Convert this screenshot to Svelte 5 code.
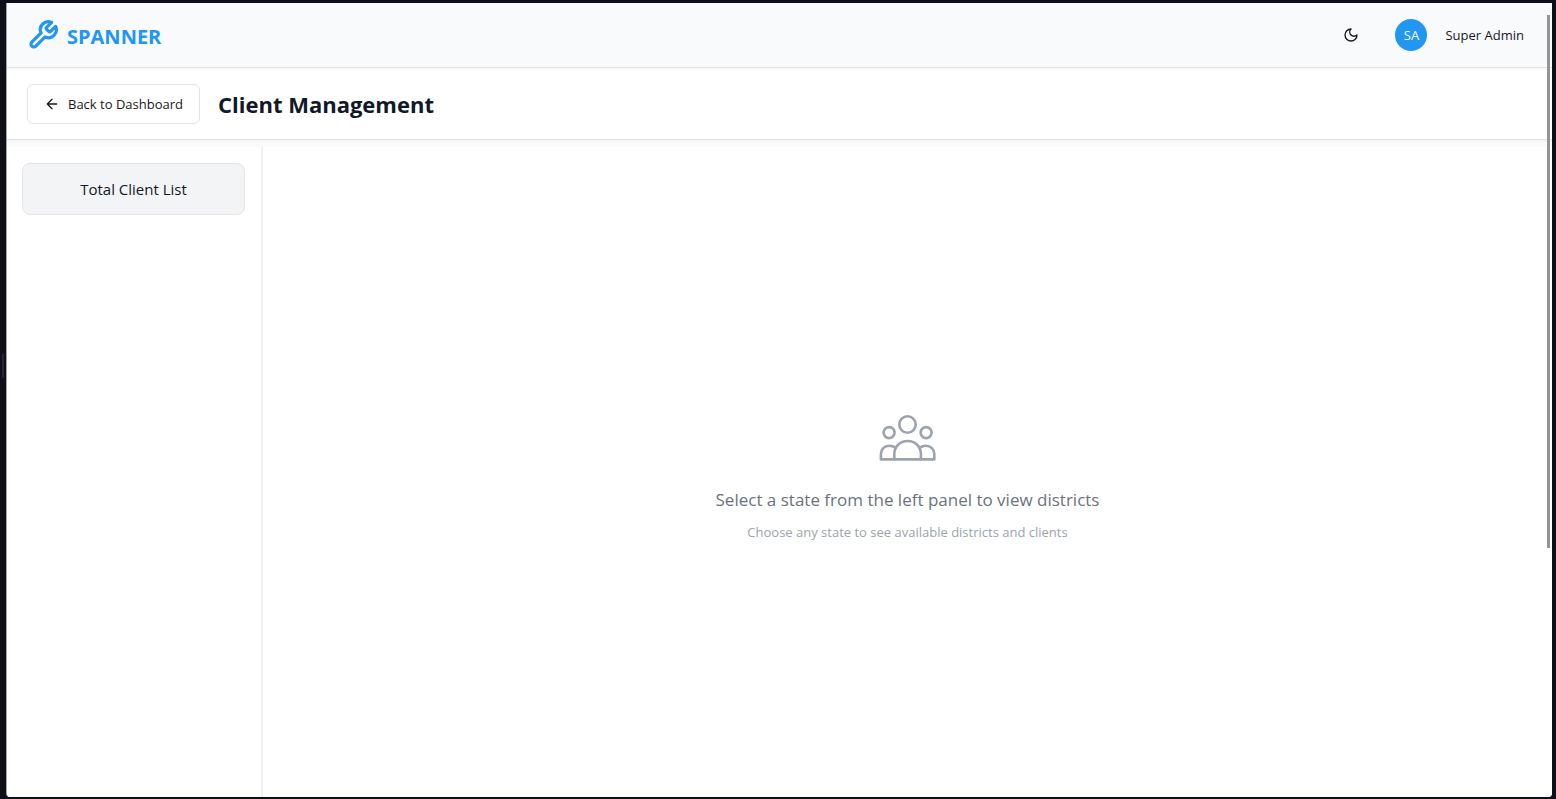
<script>
  let dark = $state(false);
</script>

<div class="frame">
  <span class="grip"></span>
  <div class="app">
    <header class="topbar">
      <a class="brand" href="#home">
        <svg class="wrench" viewBox="0 0 24 24" aria-hidden="true">
          <path d="M14.7 6.3a1 1 0 0 0 0 1.4l1.6 1.6a1 1 0 0 0 1.4 0l3.77-3.77a6 6 0 0 1-7.94 7.94l-6.91 6.91a2.12 2.12 0 0 1-3-3l6.91-6.91a6 6 0 0 1 7.94-7.94l-3.76 3.76z" />
        </svg>
        <span>SPANNER</span>
      </a>
      <div class="account">
        <button class="theme" aria-label="Toggle theme" aria-pressed={dark} onclick={() => (dark = !dark)}>
          <svg class="small" viewBox="0 0 24 24" aria-hidden="true">
            <path d="M12 3a6 6 0 0 0 9 9 9 9 0 1 1-9-9Z" />
          </svg>
        </button>
        <button class="user">
          <span class="avatar">SA</span>
          <span>Super Admin</span>
        </button>
      </div>
    </header>

    <div class="heading">
      <button class="back">
        <svg class="small" viewBox="0 0 24 24" aria-hidden="true">
          <path d="m12 19-7-7 7-7M19 12H5" />
        </svg>
        <span>Back to Dashboard</span>
      </button>
      <h1>Client Management</h1>
    </div>

    <div class="body">
      <aside>
        <button class="total">Total Client List</button>
      </aside>
      <main>
        <svg class="people" viewBox="0 0 64 64" aria-hidden="true">
          <circle cx="31.5" cy="18.5" r="8.2" />
          <circle cx="13.1" cy="26.6" r="5.5" />
          <circle cx="50.1" cy="26.6" r="5.5" />
          <path d="M18.3 53.4V48c0-7.4 5.7-13 13.3-13s13.3 5.600 13.300 13v5.400" />
          <path d="M19.300 41.600c-1.600-1.200-3.800-1.900-6-1.900-5 0-8.400 3.500-8.400 8.400v5.300h53.400v-5.300c0-4.900-3.400-8.400-8.400-8.400-2.200 0-4.400.7-6 1.900" />
        </svg>
        <p class="lead">Select a state from the left panel to view districts</p>
        <p class="hint">Choose any state to see available districts and clients</p>
      </main>
    </div>
    <span class="scroll"></span>
  </div>
</div>

<style>
  :global(body) {
    margin: 0;
    background: #0f0f19;
  }
  .frame {
    position: relative;
    box-sizing: border-box;
    min-height: 100vh;
    padding: 3px 4px 2px 6px;
    display: flex;
    background: #0f0f19;
    color: #18181b;
    font-family: "Segoe UI", "Open Sans", "Noto Sans", sans-serif;
    font-size: 13px;
    line-height: 20px;
  }
  .grip {
    position: absolute;
    left: 2px;
    top: 354px;
    width: 2px;
    height: 24px;
    background: #272733;
  }
  .app {
    position: relative;
    box-sizing: border-box;
    flex: 1;
    min-width: 0;
    display: flex;
    flex-direction: column;
    background: #f8fafc;
    border-left: 1px solid #a3a3a8;
    border-radius: 0 0 4px 4px;
    overflow: hidden;
  }
  button {
    font: inherit;
    color: inherit;
    margin: 0;
    padding: 0;
    border: 0;
    background: none;
    cursor: pointer;
  }
  svg {
    flex: none;
    fill: none;
    stroke: currentColor;
    stroke-width: 2;
    stroke-linecap: round;
    stroke-linejoin: round;
  }
  .topbar {
    position: relative;
    display: flex;
    align-items: center;
    justify-content: space-between;
    height: 64px;
    padding: 0 28px 0 20px;
    background: #f8fafc;
    border-bottom: 1px solid #e2e4e8;
    box-shadow: 0 1px 2px #0000000d;
  }
  .brand {
    display: flex;
    align-items: center;
    gap: 8px;
    color: #2196f3;
    font-size: 20px;
    line-height: 28px;
    font-weight: 700;
    text-decoration: none;
  }
  .brand span {
    padding-top: 4px;
  }
  .wrench {
    width: 32px;
    height: 32px;
    stroke-width: 2.4;
  }
  .small {
    width: 16px;
    height: 16px;
  }
  .account {
    display: flex;
    align-items: center;
    gap: 24px;
  }
  .theme {
    display: grid;
    place-items: center;
    width: 40px;
    height: 40px;
  }
  .user {
    display: flex;
    align-items: center;
    gap: 18px;
  }
  .avatar {
    display: grid;
    place-items: center;
    width: 32px;
    height: 32px;
    border-radius: 50%;
    background: #2196f3;
    color: #fff;
  }
  .heading {
    display: flex;
    align-items: center;
    gap: 18px;
    height: 71px;
    padding: 0 20px;
    background: #fff;
    border-bottom: 1px solid #e2e4e8;
    box-shadow: 0 1px 2px #0000000d;
  }
  .back {
    display: flex;
    align-items: center;
    gap: 8px;
    height: 40px;
    padding: 0 16px;
    border: 1px solid #e4e4e7;
    border-radius: 6px;
    background: #fff;
  }
  h1 {
    margin: 0;
    color: #111827;
    font-size: 22px;
    line-height: 32px;
    font-weight: 700;
  }
  .body {
    flex: 1;
    display: flex;
    margin-top: 7px;
    background: #fff;
  }
  aside {
    box-sizing: border-box;
    width: 256px;
    flex: none;
    padding: 16px 16px 16px 15px;
    border-right: 2px solid #f0f1f4;
  }
  .total {
    width: 100%;
    height: 52px;
    border: 1px solid #e5e5e7;
    border-radius: 8px;
    background: #f3f4f6;
    color: #111827;
    font-size: 15px;
  }
  main {
    flex: 1;
    display: flex;
    flex-direction: column;
    align-items: center;
    justify-content: center;
    padding-top: 4px;
    text-align: center;
  }
  .people {
    width: 64px;
    height: 64px;
    margin-bottom: 16px;
    color: #9ca3af;
    stroke-width: 2.6;
  }
  p {
    margin: 0;
  }
  .lead {
    margin-bottom: 8px;
    color: #6b7280;
    font-size: 17px;
    line-height: 28px;
  }
  .hint {
    color: #9ca3af;
  }
  .scroll {
    position: absolute;
    top: 12px;
    right: 2px;
    width: 3px;
    height: 533px;
    background: #949494;
  }
</style>
